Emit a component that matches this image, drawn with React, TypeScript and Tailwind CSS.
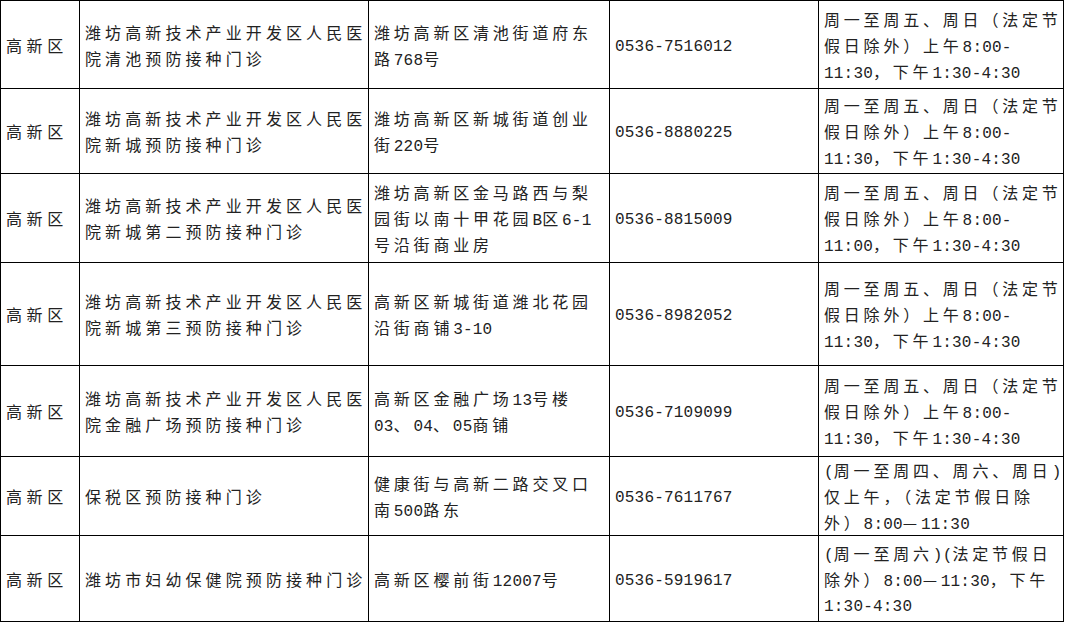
import React from "react";

type Row = {
  district: string;
  name: string[];
  address: string[];
  phone: string;
  hours: string[];
};

const hoursA = ["周一至周五、周日（法定节", "假日除外）上午8:00-", "11:30，下午1:30-4:30"];
const hoursB = ["周一至周五、周日（法定节", "假日除外）上午8:00-", "11:00，下午1:30-4:30"];

const rows: Row[] = [
  {
    district: "高新区",
    name: ["潍坊高新技术产业开发区人民医", "院清池预防接种门诊"],
    address: ["潍坊高新区清池街道府东", "路768号"],
    phone: "0536-7516012",
    hours: hoursA,
  },
  {
    district: "高新区",
    name: ["潍坊高新技术产业开发区人民医", "院新城预防接种门诊"],
    address: ["潍坊高新区新城街道创业", "街220号"],
    phone: "0536-8880225",
    hours: hoursA,
  },
  {
    district: "高新区",
    name: ["潍坊高新技术产业开发区人民医", "院新城第二预防接种门诊"],
    address: ["潍坊高新区金马路西与梨", "园街以南十甲花园B区6-1", "号沿街商业房"],
    phone: "0536-8815009",
    hours: hoursB,
  },
  {
    district: "高新区",
    name: ["潍坊高新技术产业开发区人民医", "院新城第三预防接种门诊"],
    address: ["高新区新城街道潍北花园", "沿街商铺3-10"],
    phone: "0536-8982052",
    hours: hoursA,
  },
  {
    district: "高新区",
    name: ["潍坊高新技术产业开发区人民医", "院金融广场预防接种门诊"],
    address: ["高新区金融广场13号楼", "03、04、05商铺"],
    phone: "0536-7109099",
    hours: hoursA,
  },
  {
    district: "高新区",
    name: ["保税区预防接种门诊"],
    address: ["健康街与高新二路交叉口", "南500路东"],
    phone: "0536-7611767",
    hours: ["(周一至周四、周六、周日)", "仅上午，（法定节假日除", "外）8:00—11:30"],
  },
  {
    district: "高新区",
    name: ["潍坊市妇幼保健院预防接种门诊"],
    address: ["高新区樱前街12007号"],
    phone: "0536-5919617",
    hours: ["(周一至周六)(法定节假日", "除外）8:00—11:30，下午", "1:30-4:30"],
  },
];

// CJK runs get the wide spacing, ASCII runs stay tight in a mono face
function Line({ text, wide }: { text: string; wide?: boolean }) {
  const parts = text.match(/[\x00-\x7F]+|[^\x00-\x7F]+/g) ?? [];
  return (
    <div className="h-[26px] whitespace-nowrap leading-[26px]">
      {parts.map((p, i) =>
        /^[\x00-\x7F]/.test(p) ? (
          <span key={i} className="font-['Liberation_Mono',monospace] tracking-[0.2px]">
            {p}
          </span>
        ) : (
          <span
            key={i}
            className={
              wide
                ? "font-['Noto_Sans_CJK_SC',sans-serif] tracking-[4.1px]"
                : "font-['Noto_Sans_CJK_SC',sans-serif] tracking-[3.8px]"
            }
          >
            {p}
          </span>
        ),
      )}
    </div>
  );
}

function Cell({ children }: { children: React.ReactNode }) {
  return (
    <div className="flex flex-col justify-center border-r border-b border-black pl-[5px]">
      {children}
    </div>
  );
}

export default function App() {
  return (
    <div className="w-[1065px] h-[622px] bg-white overflow-hidden text-[16px] leading-[26px] text-[#222]">
      <div className="grid w-[1064px] grid-cols-[79px_289px_241px_209px_245px] grid-rows-[88px_85px_89px_103px_91px_79px_86px] border-l border-t border-black">
        {rows.map((r, i) => (
          <React.Fragment key={i}>
            <Cell>
              <div className="whitespace-nowrap font-['Noto_Sans_CJK_SC',sans-serif] tracking-[4.6px]">
                {r.district}
              </div>
            </Cell>
            <Cell>
              {r.name.map((t, j) => (
                <Line key={j} text={t} wide />
              ))}
            </Cell>
            <Cell>
              {r.address.map((t, j) => (
                <Line key={j} text={t} />
              ))}
            </Cell>
            <Cell>
              <Line text={r.phone} />
            </Cell>
            <Cell>
              {r.hours.map((t, j) => (
                <Line key={j} text={t} />
              ))}
            </Cell>
          </React.Fragment>
        ))}
      </div>
    </div>
  );
}
